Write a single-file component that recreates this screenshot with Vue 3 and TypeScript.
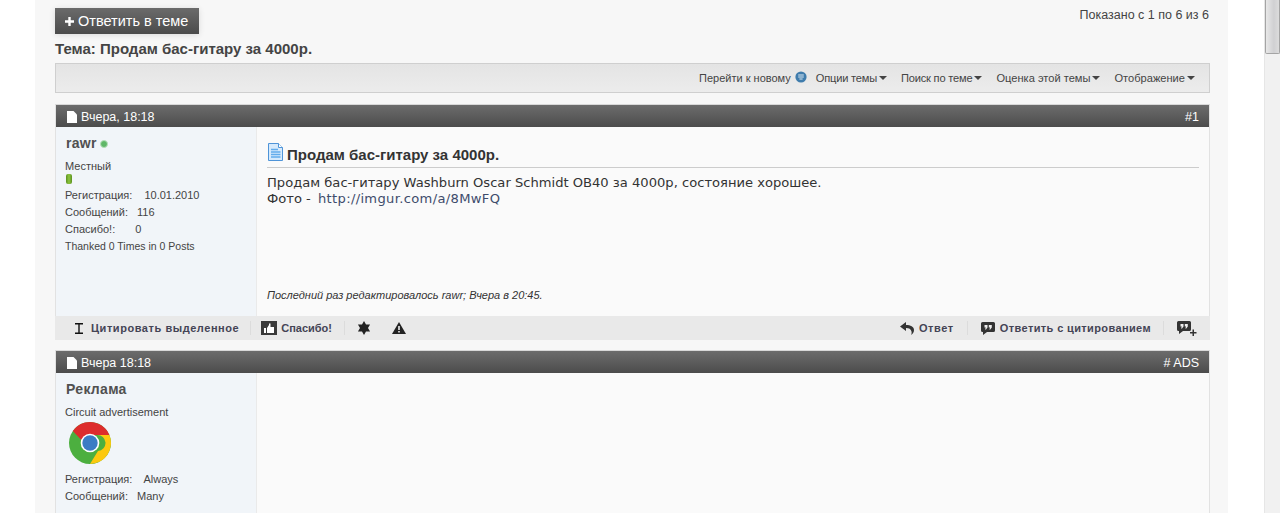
<script setup lang="ts">
const menus = ['Опции темы', 'Поиск по теме', 'Оценка этой темы', 'Отображение']
</script>

<template>
  <div class="page">
    <main class="wrap">
      <div class="toprow">
        <button class="reply">
          <svg class="plus" viewBox="0 0 9 9" width="9" height="9"><path d="M3.3 0h2.4v3.3H9v2.4H5.7V9H3.3V5.7H0V3.3h3.3z" fill="#fff" /></svg>
          <span>Ответить в теме</span>
        </button>
        <div class="count">Показано с 1 по 6 из 6</div>
      </div>
      <h1 class="title">Тема: Продам бас-гитару за 4000р.</h1>
      <nav class="toolbar">
        <span class="tool-new">Перейти к новому</span>
        <svg class="new-ic" viewBox="0 0 12 12" width="12" height="12">
          <circle cx="6" cy="6" r="5.6" fill="#3f7cac" />
          <path d="M3.2 4h5.6M3.2 6h5.6" stroke="#dbe9f3" stroke-width="1.1" />
          <path d="M4.4 8h3.2" stroke="#dbe9f3" stroke-width="1" />
        </svg>
        <span v-for="m in menus" :key="m" class="menu">{{ m }}<i class="caret"></i></span>
      </nav>

      <article class="post first">
        <header class="post-head">
          <span class="date">
            <svg class="doc" viewBox="0 0 10 12" width="10" height="12"><path d="M0 0h6.5L10 3.5V12H0z" fill="#fff" /></svg>
            Вчера, 18:18
          </span>
          <span class="num">#1</span>
        </header>
        <div class="post-body">
          <aside class="user">
            <div class="uname">rawr<i class="online"></i></div>
            <div class="rank">Местный</div>
            <i class="rep"></i>
            <dl class="stats">
              <div>Регистрация: <span class="v1">10.01.2010</span></div>
              <div>Сообщений: <span class="v2">116</span></div>
              <div>Спасибо!: <span class="v3">0</span></div>
              <div class="thanked">Thanked 0 Times in 0 Posts</div>
            </dl>
          </aside>
          <section class="content">
            <h2 class="ptitle">
              <svg viewBox="0 0 15 18" width="15" height="18" class="picon">
                <path d="M.5.5h10l4 4v13H.5z" fill="#d6eafc" stroke="#4f94d8" />
                <path d="M10.5.5v4h4" fill="#fff" stroke="#4f94d8" />
                <path d="M3 6.500h7M3 9h9.500M3 11.500h9.500M3 14h9.500" stroke="#62acec" stroke-width="1.300" />
              </svg>
              <span>Продам бас-гитару за 4000р.</span>
            </h2>
            <div class="text">
              Продам бас-гитару Washburn Oscar Schmidt OB40 за 4000р, состояние хорошее.<br />
              Фото - <a class="link">http://imgur.com/a/8MwFQ</a>
            </div>
            <div class="edited">Последний раз редактировалось rawr; Вчера в 20:45.</div>
          </section>
        </div>
        <footer class="actions">
          <div class="group">
            <span class="act quote-sel">
              <svg viewBox="0 0 10 11" width="10" height="11"><path d="M1 .7h8M1 10.300h8M5 .7v9.600" stroke="#111" stroke-width="1.400" fill="none" /></svg>
              Цитировать выделенное
            </span>
            <span class="act thanks">
              <svg viewBox="0 0 16 14" width="16" height="14"><path d="M0 0h16v14H0z" fill="#3a3a3a" /><path d="M3 7h2v5H3zM6 7l2-3V2.500h1.500V6h3.500v6H6z" fill="#fff" /></svg>
              Спасибо!
            </span>
            <span class="act star">
              <svg viewBox="0 0 14 14" width="14" height="14"><path d="M7 0L9 3.540 13.060 3.500 11 7l2.060 3.500L9 10.460 7 14 5 10.460.94 10.500 3 7 .94 3.500 5 3.540z" fill="#222" /></svg>
            </span>
            <span class="act warn">
              <svg viewBox="0 0 14 12" width="14" height="12"><path d="M7 0l7 12H0z" fill="#222" /><path d="M6.200 4h1.600v4H6.200zM6.200 9h1.600v1.500H6.200z" fill="#eee" /></svg>
            </span>
          </div>
          <div class="group">
            <span class="act back">
              <svg viewBox="0 0 14 13" width="14" height="13"><path d="M6 0L0 4.500 6 9V6c3 0 5 1 5.500 3.500.3 1.300.1 2.500-.5 3.500 2-1.300 3-3 3-5 0-3.500-3.500-5-8-5z" fill="#333" /></svg>
              Ответ
            </span>
            <span class="act quote">
              <svg viewBox="0 0 14 13" width="14" height="13"><path d="M1.500 0h11A1.500 1.500 0 0 1 14 1.500v7A1.500 1.500 0 0 1 12.500 10H6l-4 3v-3h-.5A1.500 1.500 0 0 1 0 8.500v-7A1.500 1.500 0 0 1 1.500 0z" fill="#333" /><path d="M3.500 3h3v2.500l-1.500 2H4l.8-2H3.500zM7.800 3h3v2.500l-1.500 2h-1l.8-2H7.800z" fill="#eee" /></svg>
              Ответить с цитированием
            </span>
            <span class="act multi">
              <svg viewBox="0 0 20 15" width="20" height="15"><path d="M1.500 0h11A1.500 1.500 0 0 1 14 1.500v7A1.500 1.500 0 0 1 12.500 10H6l-4 3v-3h-.5A1.500 1.500 0 0 1 0 8.500v-7A1.500 1.500 0 0 1 1.500 0z" fill="#333" /><path d="M3.500 3h3v2.500l-1.500 2H4l.8-2H3.500zM7.800 3h3v2.500l-1.500 2h-1l.8-2H7.800z" fill="#eee" /><path d="M15.500 8.500h1.500v2.500h2.500v1.500H17V15h-1.500v-2.500H13V11h2.500z" fill="#333" /></svg>
            </span>
          </div>
        </footer>
      </article>

      <article class="post ad">
        <header class="post-head">
          <span class="date">
            <svg class="doc" viewBox="0 0 10 12" width="10" height="12"><path d="M0 0h6.500L10 3.500V12H0z" fill="#fff" /></svg>
            Вчера 18:18
          </span>
          <span class="num"># ADS</span>
        </header>
        <div class="post-body">
          <aside class="user">
            <div class="uname">Реклама</div>
            <div class="rank">Circuit advertisement</div>
            <svg class="chrome" viewBox="0 0 42 42" width="42" height="42">
              <circle cx="21" cy="21" r="21" fill="#4caf3f" />
              <path d="M21 0a21 21 0 0 1 19.400 13H21a8 8 0 0 0-7.700 6L3.800 9A21 21 0 0 1 21 0z" fill="#dd2c2c" />
              <path d="M40.400 13A21 21 0 0 1 21 42l8-13a8 8 0 0 0-1-16z" fill="#fcc90f" />
              <circle cx="21" cy="21" r="9.300" fill="#fff" />
              <circle cx="21" cy="21" r="7.700" fill="#3b7cc4" />
            </svg>
            <dl class="stats ad-stats">
              <div>Регистрация: <span class="v1">Always</span></div>
              <div>Сообщений: <span class="v2b">Many</span></div>
            </dl>
          </aside>
          <section class="content"></section>
        </div>
      </article>
    </main>
    <div class="scrollbar"><div class="thumb"></div></div>
  </div>
</template>

<style>
html, body { margin: 0; background: #fff; overflow: hidden; }
</style>

<style scoped>
.page { height: 513px; overflow: hidden; display: flex; justify-content: space-between; font-family: "Liberation Sans", Arial, sans-serif; color: #3e3e3e; }
.wrap { margin-left: 35px; width: 1193px; height: 513px; background: #f7f7f7; padding: 8px 18px 0 20px; box-sizing: border-box; overflow: hidden; }
.scrollbar { width: 16px; height: 513px; background: #f1f1f1; border-left: 1px solid #e6e6e6; box-sizing: border-box; }
.thumb { width: 15px; height: 54px; background: linear-gradient(90deg, #e8e8e8, #d0d0d2 60%, #dcdcdc); border: 1px solid #a4a4a4; border-top: 0; border-radius: 0 0 2px 2px; box-sizing: border-box; }
.toprow { display: flex; justify-content: space-between; align-items: flex-start; }
.reply { display: flex; align-items: center; gap: 4px; height: 26px; width: 144px; padding: 0 0 0 10px; border: 0; background: linear-gradient(#6b6b6b, #4b4b4b); color: #fff; font: 14.5px "Liberation Sans", sans-serif; box-shadow: 0 1px 6px rgba(0,0,0,.12); }
.count { font-size: 12.5px; margin-right: 1px; color: #444; line-height: 14px; }
.title { font-size: 15px; line-height: 17px; margin: 6px 0 6px; color: #444; font-weight: 700; }
.toolbar { height: 30px; box-sizing: border-box; background: linear-gradient(#e4e4e4, #ececec); border: 1px solid #cfcfcf; display: flex; align-items: center; justify-content: flex-end; padding-right: 14px; font-size: 11px; color: #444; }
.new-ic { margin: -2px 0 0 4px; }
.menu { margin-left: 9px; display: flex; align-items: center; font-size: 11.1px; }
.menu + .menu { margin-left: 14px; }
.menu:nth-of-type(-n+3) { letter-spacing: -.2px; }
.caret { width: 0; height: 0; margin-left: 2px; border-left: 4px solid transparent; border-right: 4px solid transparent; border-top: 4px solid #444; }
.post { margin-top: 11px; border: 1px solid #e2e2e2; border-top-color: #d8d8d8; background: #fafafa; width: 100%; box-sizing: border-box; }
.ad { margin-top: 10px; }
.post-head { height: 22px; box-sizing: border-box; background: linear-gradient(#6c6c6c, #4c4c4c); color: #fff; display: flex; align-items: center; justify-content: space-between; padding: 1px 10px 0 11px; font-size: 12.5px; }
.date { display: flex; align-items: center; gap: 4px; }
.post-body { display: flex; }
.first .post-body { height: 189px; }
.ad .post-body { height: 140px; }
.user { width: 201px; box-sizing: border-box; flex: none; background: #f1f5f9; border-right: 1px solid #eaeaea; padding: 8px 10px 8px 9px; font-size: 11px; color: #444; }
.uname { font-size: 14px; font-weight: 700; line-height: 17px; display: flex; align-items: center; color: #505050; margin-left: 1px; letter-spacing: .3px; }
.online { width: 6px; height: 6px; margin-left: 3px; border-radius: 50%; background: #5fb768; border: 1px solid #b5dfb9; }
.rank { margin-top: 7px; line-height: 14px; }
.rep { display: block; width: 6px; height: 10px; border-radius: 2px; background: linear-gradient(90deg, #5b9120, #8dc63f 50%, #5b9120); margin: 1px 0 0 1px; }
.stats { margin: 3px 0 0; line-height: 17px; }
.thanked { font-size: 10.5px; }
.v1 { margin-left: 9px; }
.v2 { margin-left: 6px; }
.v2b { margin-left: 6px; }
.v3 { margin-left: 17px; }
.ad-stats .v1 { margin-left: 8px; }
.content { flex: 1; position: relative; padding: 16px 10px 0; }
.ptitle { margin: 0; display: flex; align-items: flex-start; gap: 4px; font-size: 15px; line-height: 23px; padding-bottom: 1px; border-bottom: 1px solid #ccc; color: #333; font-weight: 700; }
.picon { margin-left: 1px; }
.text { margin-top: 7px; font: 13.100px/16px "DejaVu Sans", sans-serif; color: #333; }
.link { color: #3e4c6c; margin-left: 3px; letter-spacing: .33px; }
.edited { margin-top: 81px; font-size: 11px; line-height: 14px; font-style: italic; color: #333; }
.actions { height: 24px; margin: 0 -1px -1px; background: #e9e9e9; display: flex; justify-content: space-between; align-items: center; padding: 0 13px 0 19px; font-size: 11px; font-weight: 700; color: #445; }
.group { display: flex; align-items: center; }
.act { display: flex; align-items: center; gap: 4px; height: 14px; }
.quote-sel { gap: 7px; padding-right: 11px; border-right: 1px solid #dcdcdc; letter-spacing: .55px; }
.thanks { padding: 0 12px 0 10px; border-right: 1px solid #dcdcdc; }
.star { padding-left: 12px; }
.warn { padding-left: 21px; }
.back { gap: 5px; padding-right: 13px; border-right: 1px solid #dcdcdc; letter-spacing: .6px; }
.quote { gap: 5px; padding: 0 12px 0 13px; border-right: 1px solid #dcdcdc; letter-spacing: .38px; }
.multi { padding-left: 13px; }
.chrome { display: block; margin: 3px 0 0 4px; }
.ad-stats { margin-top: 7px; }
</style>
